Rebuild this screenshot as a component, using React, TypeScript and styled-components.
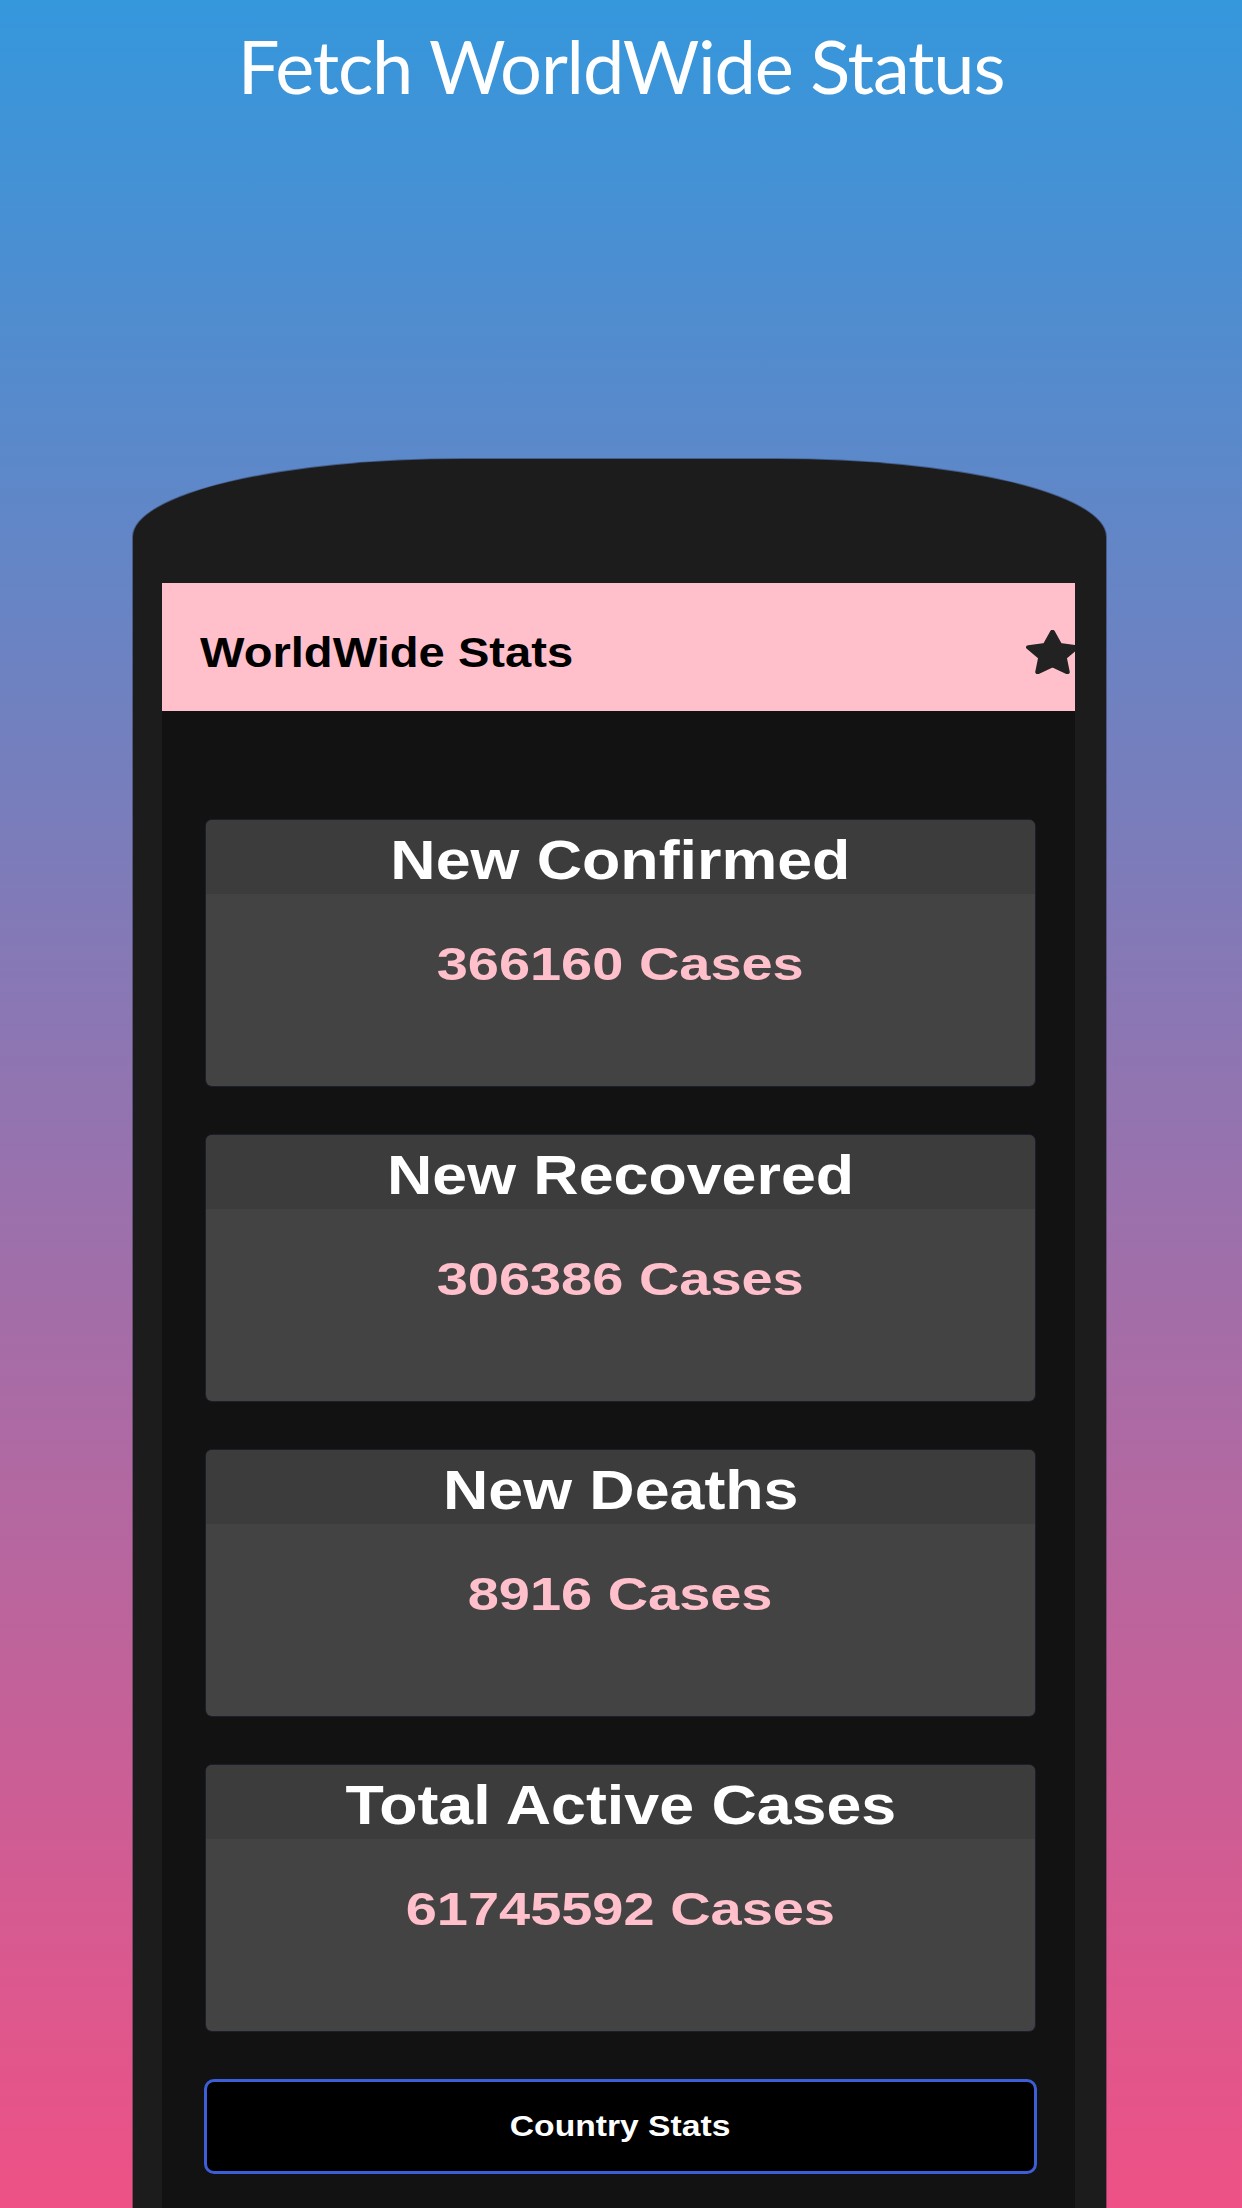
import React from "react";
import styled, { createGlobalStyle } from "styled-components";

const GlobalStyle = createGlobalStyle`
  html, body {
    margin: 0;
    padding: 0;
  }
  body {
    font-family: "Liberation Sans", Arial, sans-serif;
  }
`;

const Page = styled.div`
  width: 1242px;
  height: 2208px;
  overflow: hidden;
  display: flex;
  flex-direction: column;
  align-items: center;
  background: linear-gradient(180deg, #3597dc 0%, #9274b0 50%, #ee5185 100%);
`;

const Title = styled.h1`
  margin: 21px 0 0 0;
  font-family: Lato, "Open Sans", sans-serif;
  font-weight: 400;
  font-size: 74px;
  letter-spacing: -1.2px;
  line-height: 90px;
  color: #ffffff;
`;

const Phone = styled.div`
  margin-top: 348px;
  margin-left: -3px;
  width: 973px;
  flex: 1;
  box-sizing: border-box;
  padding: 124px 31px 0 29px;
  background: #1c1c1c;
  border-radius: 330px 330px 0 0 / 78px 78px 0 0;
  box-shadow: 0 0 0 1px rgba(40, 40, 60, 0.45);
  display: flex;
`;

const Screen = styled.div`
  flex: 1;
  background: #121212;
  overflow: hidden;
  display: flex;
  flex-direction: column;
`;

const AppBar = styled.div`
  height: 128px;
  box-sizing: border-box;
  padding: 10px 0 0 38px;
  background: #ffc0cb;
  display: flex;
  align-items: center;
  justify-content: space-between;
  overflow: hidden;
  flex-shrink: 0;
`;

const AppBarTitle = styled.div`
  font-family: "Liberation Sans", Arial, sans-serif;
  font-weight: 700;
  font-size: 43px;
  line-height: 1;
  color: #000000;
  transform: scaleX(1.096);
  transform-origin: left center;
`;

const StarIcon = styled.svg`
  width: 53px;
  height: 44px;
  margin-right: -4px;
  flex-shrink: 0;
`;

const Content = styled.div`
  display: flex;
  flex-direction: column;
  gap: 49px;
  padding: 109px 40px 0 44px;
`;

const Card = styled.div`
  height: 266px;
  border-radius: 6px;
  overflow: hidden;
  background: #434343;
  box-shadow: 0 0 0 1px #1b1e2b;
  display: flex;
  flex-direction: column;
`;

const CardHead = styled.div`
  height: 74px;
  box-sizing: border-box;
  padding-top: 12px;
  background: #3c3c3c;
  display: flex;
  justify-content: center;
`;

const CardTitle = styled.div`
  font-family: "Liberation Sans", Arial, sans-serif;
  font-weight: 700;
  font-size: 56px;
  line-height: 1;
  color: #ffffff;
  white-space: nowrap;
  transform: scaleX(1.12);
`;

const CardBody = styled.div`
  flex: 1;
  padding-top: 46px;
  display: flex;
  justify-content: center;
`;

const CardValue = styled.div`
  font-family: "Liberation Sans", Arial, sans-serif;
  font-weight: 700;
  font-size: 47px;
  line-height: 1;
  color: #ffc0cb;
  white-space: nowrap;
  transform: scaleX(1.19);
`;

const CountryButton = styled.button`
  margin: -1px -2px 0 -2px;
  height: 95px;
  box-sizing: border-box;
  border: 3px solid #3c5fd8;
  border-radius: 10px;
  background: #000000;
  color: #ffffff;
  display: flex;
  align-items: center;
  justify-content: center;
  cursor: pointer;
`;

const ButtonLabel = styled.span`
  font-family: "Liberation Sans", Arial, sans-serif;
  font-weight: 700;
  font-size: 29px;
  line-height: 1;
  transform: scaleX(1.16);
`;

const stats = [
  { title: "New Confirmed", value: 366160 },
  { title: "New Recovered", value: 306386 },
  { title: "New Deaths", value: 8916 },
  { title: "Total Active Cases", value: 61745592 },
];

const Star = () => (
  <StarIcon viewBox="1 0.6 22 20.8" preserveAspectRatio="none">
    <polygon
      points="12,1.5 15.057,7.793 21.986,8.755 16.945,13.607 18.172,20.495 12,17.2 5.828,20.495 7.055,13.607 2.014,8.755 8.943,7.793"
      fill="#222222"
      stroke="#222222"
      strokeWidth="2"
      strokeLinejoin="round"
    />
  </StarIcon>
);

export default function App() {
  return (
    <>
      <GlobalStyle />
      <Page>
        <Title>Fetch WorldWide Status</Title>
        <Phone>
          <Screen>
            <AppBar>
              <AppBarTitle>WorldWide Stats</AppBarTitle>
              <Star />
            </AppBar>
            <Content>
              {stats.map((s) => (
                <Card key={s.title}>
                  <CardHead>
                    <CardTitle>{s.title}</CardTitle>
                  </CardHead>
                  <CardBody>
                    <CardValue>{s.value} Cases</CardValue>
                  </CardBody>
                </Card>
              ))}
              <CountryButton>
                <ButtonLabel>Country Stats</ButtonLabel>
              </CountryButton>
            </Content>
          </Screen>
        </Phone>
      </Page>
    </>
  );
}
